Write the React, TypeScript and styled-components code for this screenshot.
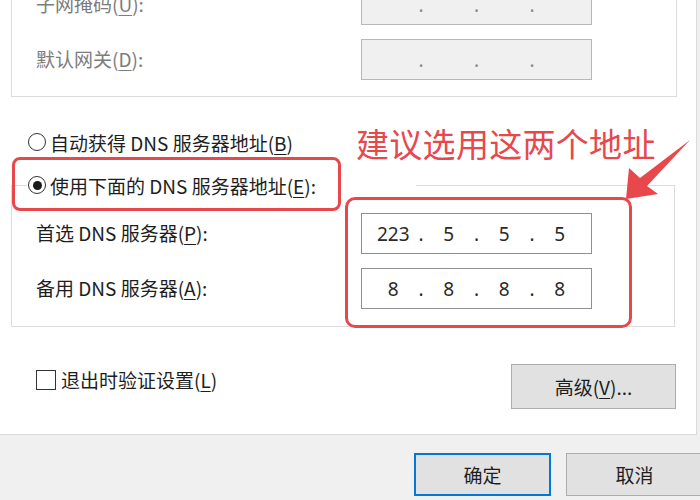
import React from 'react';
import styled, { createGlobalStyle } from 'styled-components';

const GlobalStyle = createGlobalStyle`
  html, body {
    margin: 0;
    padding: 0;
    background: #f0f0f0;
  }
  body {
    font-family: "Noto Sans CJK SC", "Noto Sans", sans-serif;
  }
`;

const Screen = styled.div`
  position: relative;
  width: 700px;
  height: 500px;
  overflow: hidden;
  background: #f0f0f0;
  color: #1e1e1e;
  font-size: 19px;
`;

const TabPage = styled.div`
  width: 697px;
  height: 435px;
  box-sizing: border-box;
  background: #fff;
  border-right: 1px solid #d9d9d9;
  border-bottom: 1px solid #d9d9d9;
  display: flex;
  flex-direction: column;
`;

const IpGroup = styled.div`
  margin: -16px 0 0 11px;
  width: 666px;
  box-sizing: border-box;
  border: 1px solid #dcdcdc;
  border-top: none;
  padding: 0 0 16px 24px;
  display: grid;
  grid-template-columns: 325px 231px;
  row-gap: 14px;
  align-items: center;
`;

const FieldLabel = styled.span<{ $disabled?: boolean }>`
  color: ${({ $disabled }) => ($disabled ? '#7d7d7d' : '#1e1e1e')};
  white-space: nowrap;
  margin-top: -3px;
`;

const Key = styled.span`
  text-decoration: underline;
  text-underline-offset: 3px;
`;

const IpBox = styled.div<{ $disabled?: boolean }>`
  height: 41px;
  box-sizing: border-box;
  border: 1px solid ${({ $disabled }) => ($disabled ? '#b7b7b7' : '#8f8f8f')};
  background: ${({ $disabled }) => ($disabled ? '#f0f0f0' : '#fff')};
  color: ${({ $disabled }) => ($disabled ? '#8a8a8a' : '#2a2a2a')};
  display: flex;
  align-items: center;
  justify-content: center;
  font-family: "Noto Sans", "Noto Sans CJK SC", sans-serif;
`;

const Octet = styled.span`
  width: 38px;
  text-align: center;
`;

const Dot = styled.span`
  width: 17.5px;
  text-align: center;
`;

const RadioRow = styled.label<{ $indent?: number }>`
  display: flex;
  align-items: center;
  gap: 4px;
  height: 26px;
  margin-left: ${({ $indent = 0 }) => $indent}px;
  white-space: nowrap;
`;

const RadioMark = styled.span<{ $checked?: boolean }>`
  width: 18px;
  height: 18px;
  box-sizing: border-box;
  border: 1.5px solid #333;
  border-radius: 50%;
  background: #fff;
  display: inline-flex;
  align-items: center;
  justify-content: center;
  flex-shrink: 0;

  &::after {
    content: '';
    width: 9px;
    height: 9px;
    border-radius: 50%;
    background: #1a1a1a;
    display: ${({ $checked }) => ($checked ? 'block' : 'none')};
  }
`;

const AutoDns = styled.div`
  margin-top: 32px;
`;

const DnsGroup = styled.fieldset`
  margin: 17px 0 0 11px;
  width: 664px;
  box-sizing: border-box;
  border: 1px solid #dcdcdc;
  padding: 0 0 17px 15px;
  min-width: 0;
`;

const Legend = styled.legend`
  padding: 0 100px 0 1px;
`;

const DnsGrid = styled.div`
  margin: 15px 0 0 9px;
  display: grid;
  grid-template-columns: 325px 231px;
  row-gap: 14px;
  align-items: center;
`;

const ActionRow = styled.div`
  margin-top: 37px;
  padding: 0 20px 0 36px;
  display: flex;
  justify-content: space-between;
  align-items: flex-start;
`;

const CheckRow = styled.label`
  margin-top: 2px;
  display: flex;
  align-items: center;
  gap: 5px;
  white-space: nowrap;
`;

const CheckMark = styled.span`
  width: 20px;
  height: 20px;
  box-sizing: border-box;
  border: 1.5px solid #333;
  background: #fff;
`;

const Button = styled.button<{ $default?: boolean; $w: number; $h: number }>`
  width: ${({ $w }) => $w}px;
  height: ${({ $h }) => $h}px;
  flex-shrink: 0;
  box-sizing: border-box;
  background: #e1e1e1;
  border: ${({ $default }) => ($default ? '2px solid #0078d7' : '1px solid #adadad')};
  font-family: "Noto Sans CJK SC", "Noto Sans", sans-serif;
  font-size: 19px;
  color: #1e1e1e;
  padding: 0;
`;

const Footer = styled.div`
  padding: 18px 0 0 414px;
  display: flex;
  gap: 15px;
`;

const Highlight = styled.div<{ $x: number; $y: number; $w: number; $h: number; $r: number }>`
  position: absolute;
  left: ${({ $x }) => $x}px;
  top: ${({ $y }) => $y}px;
  width: ${({ $w }) => $w}px;
  height: ${({ $h }) => $h}px;
  box-sizing: border-box;
  border: 3.5px solid #e8474b;
  border-radius: ${({ $r }) => $r}px;
  pointer-events: none;
`;

const Note = styled.div`
  position: absolute;
  left: 356px;
  top: 122px;
  font-size: 33px;
  line-height: 42px;
  color: #e6484c;
  white-space: nowrap;
  letter-spacing: 0.3px;
`;

const Arrow = styled.svg`
  position: absolute;
  left: 600px;
  top: 130px;
  width: 100px;
  height: 80px;
`;

const IpField: React.FC<{ octets: string[]; disabled?: boolean }> = ({ octets, disabled }) => (
  <IpBox $disabled={disabled}>
    {octets.map((o, i) => (
      <React.Fragment key={i}>
        {i > 0 && <Dot>.</Dot>}
        <Octet>{o}</Octet>
      </React.Fragment>
    ))}
  </IpBox>
);

const blank = ['', '', '', ''];

export default function App() {
  return (
    <>
      <GlobalStyle />
      <Screen>
        <TabPage>
          <IpGroup>
            <FieldLabel $disabled>
              子网掩码(<Key>U</Key>):
            </FieldLabel>
            <IpField octets={blank} disabled />
            <FieldLabel $disabled>
              默认网关(<Key>D</Key>):
            </FieldLabel>
            <IpField octets={blank} disabled />
          </IpGroup>

          <AutoDns>
            <RadioRow $indent={28}>
              <RadioMark />
              <span>
                自动获得 DNS 服务器地址(<Key>B</Key>)
              </span>
            </RadioRow>
          </AutoDns>

          <DnsGroup>
            <Legend>
              <RadioRow>
                <RadioMark $checked />
                <span>
                  使用下面的 DNS 服务器地址(<Key>E</Key>):
                </span>
              </RadioRow>
            </Legend>
            <DnsGrid>
              <FieldLabel>
                首选 DNS 服务器(<Key>P</Key>):
              </FieldLabel>
              <IpField octets={['223', '5', '5', '5']} />
              <FieldLabel>
                备用 DNS 服务器(<Key>A</Key>):
              </FieldLabel>
              <IpField octets={['8', '8', '8', '8']} />
            </DnsGrid>
          </DnsGroup>

          <ActionRow>
            <CheckRow>
              <CheckMark />
              <span>
                退出时验证设置(<Key>L</Key>)
              </span>
            </CheckRow>
            <Button $w={165} $h={45}>
              高级(<Key>V</Key>)...
            </Button>
          </ActionRow>
        </TabPage>

        <Footer>
          <Button $default $w={137} $h={43}>
            确定
          </Button>
          <Button $w={137} $h={43}>
            取消
          </Button>
        </Footer>

        <Highlight $x={12} $y={157} $w={329} $h={54} $r={8} />
        <Highlight $x={345} $y={197} $w={287} $h={131} $r={10} />
        <Note>建议选用这两个地址</Note>
        <Arrow viewBox="600 130 100 80">
          <polygon
            points="626,199 629,168 640,178 690,140 647,186 658,194"
            fill="#e8474b"
          />
        </Arrow>
      </Screen>
    </>
  );
}
